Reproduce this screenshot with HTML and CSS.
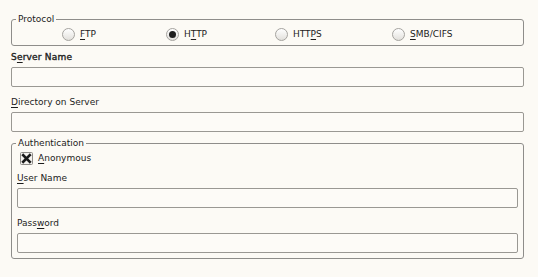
FILE: index.html
```html
<!DOCTYPE html>
<html lang="en">
<head>
    <meta charset="UTF-8">
    <title>Connect to Server</title>
    <link rel="stylesheet" href="styles.css">
</head>
<body>
    <div class="dialog">
        <!-- Protocol choice -->
        <fieldset class="frame protocol">
            <legend>Protocol</legend>
            <div class="radios">
                <label class="radio"><span class="radio-mark"></span><span><u>F</u>TP</span></label>
                <label class="radio"><span class="radio-mark checked"></span><span>H<u>T</u>TP</span></label>
                <label class="radio"><span class="radio-mark"></span><span>HTT<u>P</u>S</span></label>
                <label class="radio"><span class="radio-mark"></span><span><u>S</u>MB/CIFS</span></label>
            </div>
        </fieldset>

        <div class="field first">
            <label class="field-label focused">S<u>e</u>rver Name</label>
            <input type="text" class="entry">
        </div>

        <div class="field">
            <label class="field-label"><u>D</u>irectory on Server</label>
            <input type="text" class="entry">
        </div>

        <!-- Authentication -->
        <fieldset class="frame auth">
            <legend>Authentication</legend>
            <label class="check-row">
                <svg class="check-mark" width="13" height="13" viewBox="0 0 13 13">
                    <rect x="0.5" y="0.5" width="12" height="12" rx="1" fill="#f4f2ee" stroke="#8d8b87"/>
                    <path d="M3.2 3.2 L9.8 9.8 M9.8 3.2 L3.2 9.8" stroke="#1a1a1a" stroke-width="2.6" stroke-linecap="square"/>
                </svg>
                <span><u>A</u>nonymous</span>
            </label>

            <div class="field first-in-frame">
                <label class="field-label"><u>U</u>ser Name</label>
                <input type="text" class="entry">
            </div>

            <div class="field">
                <label class="field-label">Pass<u>w</u>ord</label>
                <input type="password" class="entry">
            </div>
        </fieldset>
    </div>
</body>
</html>
```

FILE: styles.css
```css
body {
    margin: 0;
    background: #fcfaf5;
    font-family: "DejaVu Sans", sans-serif;
    font-size: 9px;
    color: #1c1c1c;
}
.dialog {
    display: flex;
    flex-direction: column;
    padding: 13px 14px 0 11px;
}
u {
    text-decoration-thickness: 1px;
    text-underline-offset: 2px;
}
.frame {
    margin: 0;
    min-width: 0;
    padding: 0 5px;
    border: 1px solid #8e8d8a;
    border-radius: 3px;
}
.frame legend {
    padding: 0 2px;
    margin-left: -1px;
    line-height: 12px;
}
.radios {
    display: grid;
    grid-template-columns: 104px 109px 117px auto;
    padding: 2px 0 4px 45px;
}
.radio {
    display: flex;
    align-items: center;
    gap: 5px;
    line-height: 14px;
}
.radio-mark {
    position: relative;
    width: 13px;
    height: 13px;
    box-sizing: border-box;
    border: 1px solid #a5a39f;
    border-radius: 50%;
    background: linear-gradient(#ffffff, #e2e0dc);
}
.radio-mark.checked::after {
    content: "";
    position: absolute;
    left: 2px;
    top: 2px;
    width: 7px;
    height: 7px;
    border-radius: 50%;
    background: #1e1e1e;
}
.field {
    margin-top: 9px;
}
.field.first {
    margin-top: 5px;
}
.field.first-in-frame {
    margin-top: 7px;
}
.field-label {
    display: block;
    line-height: 13px;
    margin-bottom: 3px;
}
.focused {
    letter-spacing: 0.2px;
    -webkit-text-stroke: 0.35px #1c1c1c;
}
.entry {
    display: block;
    width: 100%;
    height: 20px;
    margin: 0;
    box-sizing: border-box;
    border: 1px solid #9a9893;
    border-radius: 2px;
    background: #fdfbf7;
    outline: none;
}
.auth {
    margin-top: 5px;
    padding-bottom: 5px;
}
.check-row {
    display: flex;
    align-items: center;
    gap: 5px;
    line-height: 14px;
    padding: 2px 0 0 3px;
}
```
